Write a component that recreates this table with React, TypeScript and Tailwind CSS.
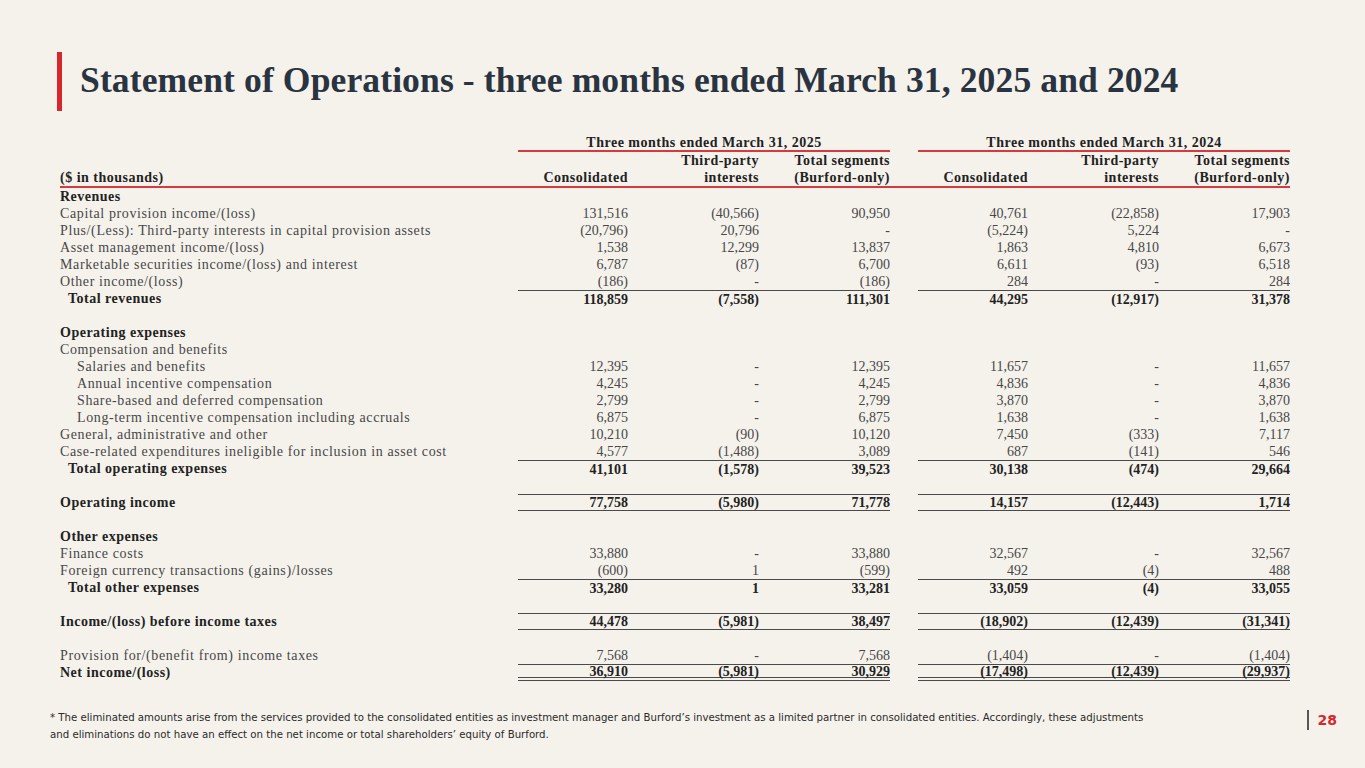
import React from 'react';

type Line = 'none' | 'single' | 'double';

interface RowData {
  label: string;
  vals?: string[];
  bold?: boolean;
  indent?: 0 | 1 | 2;
  top?: boolean;
  bottom?: Line;
}

const rows: RowData[] = [
  { label: 'Revenues', bold: true },
  { label: 'Capital provision income/(loss)', vals: ['131,516', '(40,566)', '90,950', '40,761', '(22,858)', '17,903'] },
  { label: 'Plus/(Less): Third-party interests in capital provision assets', vals: ['(20,796)', '20,796', '-', '(5,224)', '5,224', '-'] },
  { label: 'Asset management income/(loss)', vals: ['1,538', '12,299', '13,837', '1,863', '4,810', '6,673'] },
  { label: 'Marketable securities income/(loss) and interest', vals: ['6,787', '(87)', '6,700', '6,611', '(93)', '6,518'] },
  { label: 'Other income/(loss)', vals: ['(186)', '-', '(186)', '284', '-', '284'] },
  { label: 'Total revenues', bold: true, indent: 1, top: true, vals: ['118,859', '(7,558)', '111,301', '44,295', '(12,917)', '31,378'] },
  { label: '' },
  { label: 'Operating expenses', bold: true },
  { label: 'Compensation and benefits' },
  { label: 'Salaries and benefits', indent: 2, vals: ['12,395', '-', '12,395', '11,657', '-', '11,657'] },
  { label: 'Annual incentive compensation', indent: 2, vals: ['4,245', '-', '4,245', '4,836', '-', '4,836'] },
  { label: 'Share-based and deferred compensation', indent: 2, vals: ['2,799', '-', '2,799', '3,870', '-', '3,870'] },
  { label: 'Long-term incentive compensation including accruals', indent: 2, vals: ['6,875', '-', '6,875', '1,638', '-', '1,638'] },
  { label: 'General, administrative and other', vals: ['10,210', '(90)', '10,120', '7,450', '(333)', '7,117'] },
  { label: 'Case-related expenditures ineligible for inclusion in asset cost', vals: ['4,577', '(1,488)', '3,089', '687', '(141)', '546'] },
  { label: 'Total operating expenses', bold: true, indent: 1, top: true, vals: ['41,101', '(1,578)', '39,523', '30,138', '(474)', '29,664'] },
  { label: '' },
  { label: 'Operating income', bold: true, top: true, bottom: 'single', vals: ['77,758', '(5,980)', '71,778', '14,157', '(12,443)', '1,714'] },
  { label: '' },
  { label: 'Other expenses', bold: true },
  { label: 'Finance costs', vals: ['33,880', '-', '33,880', '32,567', '-', '32,567'] },
  { label: 'Foreign currency transactions (gains)/losses', vals: ['(600)', '1', '(599)', '492', '(4)', '488'] },
  { label: 'Total other expenses', bold: true, indent: 1, top: true, vals: ['33,280', '1', '33,281', '33,059', '(4)', '33,055'] },
  { label: '' },
  { label: 'Income/(loss) before income taxes', bold: true, top: true, bottom: 'single', vals: ['44,478', '(5,981)', '38,497', '(18,902)', '(12,439)', '(31,341)'] },
  { label: '' },
  { label: 'Provision for/(benefit from) income taxes', vals: ['7,568', '-', '7,568', '(1,404)', '-', '(1,404)'] },
  { label: 'Net income/(loss)', bold: true, top: true, bottom: 'double', vals: ['36,910', '(5,981)', '30,929', '(17,498)', '(12,439)', '(29,937)'] },
];

function Group({ vals, row }: { vals: string[]; row: RowData }) {
  const lineCls = [
    row.top ? 'border-t border-[#4a4a4a]' : '',
    row.bottom === 'single' ? 'border-b border-[#4a4a4a]' : '',
    row.bottom === 'double' ? 'border-b-[4px] border-double border-[#2a2a2a]' : '',
  ].join(' ');
  return (
    <div className={`flex w-[372px] h-full items-center ${lineCls}`}>
      <div className="w-[110px] text-right">{vals[0]}</div>
      <div className="w-[131px] text-right">{vals[1]}</div>
      <div className="w-[131px] text-right">{vals[2]}</div>
    </div>
  );
}

function Row({ row }: { row: RowData }) {
  const vals = row.vals ?? ['', '', '', '', '', ''];
  const pad = row.indent === 1 ? 'pl-[8px]' : row.indent === 2 ? 'pl-[17px]' : '';
  return (
    <div className={`flex h-[17px] ${row.bold ? 'font-bold text-[#222]' : 'text-[#474747]'}`}>
      <div className={`w-[458px] flex items-center whitespace-nowrap ${row.bold ? 'tracking-[0.5px]' : 'tracking-[0.62px]'} ${pad}`}>
        {row.label}
      </div>
      <Group vals={vals.slice(0, 3)} row={row} />
      <div className="w-[28px]" />
      <Group vals={vals.slice(3)} row={row} />
    </div>
  );
}

function GroupHead({ year }: { year: string }) {
  return (
    <div className="w-[372px] flex flex-col">
      <div className="h-[17px] flex items-center justify-center border-b-2 border-[#d43a3f]">
        Three months ended March 31, {year}
      </div>
      <div className="flex h-[34px] leading-[17px]">
        <div className="w-[110px] text-right self-end">Consolidated</div>
        <div className="w-[131px] text-right">Third-party<br />interests</div>
        <div className="w-[131px] text-right">Total segments<br />(Burford-only)</div>
      </div>
    </div>
  );
}

export default function App() {
  return (
    <div className="w-[1365px] h-[768px] bg-[#f5f2ec] flex flex-col overflow-hidden">
      {/* Title */}
      <div className="flex items-center h-[60px] mt-[51px] pl-[57px]">
        <div className="w-[5px] h-[59px] bg-[#d8262d]" />
        <h1 className="ml-[18px] text-[35.6px] font-bold text-[#2a3440] tracking-[0.1px] whitespace-nowrap" style={{ fontFamily: '"Liberation Serif", serif' }}>
          Statement of Operations - three months ended March 31, 2025 and 2024
        </h1>
      </div>

      {/* Table */}
      <div className="ml-[60px] mt-[24px] text-[14px] leading-[17px]" style={{ fontFamily: '"Liberation Serif", serif' }}>
        <div className="flex font-bold text-[#222] border-b-2 border-[#d43a3f] w-[1230px] tracking-[0.5px]">
          <div className="w-[458px] self-end h-[17px]">($ in thousands)</div>
          <GroupHead year="2025" />
          <div className="w-[28px]" />
          <GroupHead year="2024" />
        </div>
        {rows.map((r, i) => (
          <Row key={i} row={r} />
        ))}
      </div>

      {/* Footer */}
      <div className="flex mt-[28px] pl-[50px] pr-[28px]">
        <p className="flex-1 text-[10.2px] leading-[17px] text-[#2a2a2a]" style={{ fontFamily: '"DejaVu Sans", sans-serif' }}>
          * The eliminated amounts arise from the services provided to the consolidated entities as investment manager and Burford’s investment as a limited partner in consolidated entities. Accordingly, these adjustments
          <br />
          and eliminations do not have an effect on the net income or total shareholders’ equity of Burford.
        </p>
        <div className="flex items-center h-[20px] mt-[1px] gap-[9px]">
          <div className="w-[2px] h-[20px] bg-[#555]" />
          <span className="text-[14px] font-bold text-[#d8262d]" style={{ fontFamily: '"DejaVu Sans", sans-serif' }}>28</span>
        </div>
      </div>
    </div>
  );
}
